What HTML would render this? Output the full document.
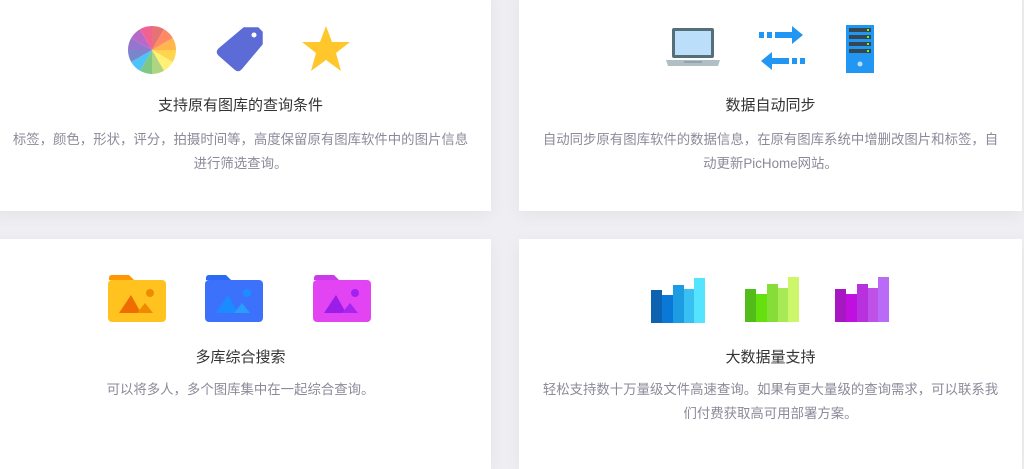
<!DOCTYPE html>
<html><head><meta charset="utf-8"><style>
*{margin:0;padding:0;box-sizing:border-box}
body{width:1024px;height:457px;background:#efeff3;position:relative;overflow:hidden;font-family:"Liberation Sans","Noto Sans CJK SC",sans-serif}
.card{position:absolute;background:#fff;box-shadow:0 4px 16px rgba(0,0,0,0.05)}
.t{position:absolute;left:0;right:0;text-align:center;font-size:15px;color:#333;white-space:nowrap}
.d{position:absolute;left:0;right:0;text-align:center;font-size:13.4px;line-height:24px;color:#8b8a99;white-space:nowrap}
svg{position:absolute;overflow:visible}
</style></head><body>
<div class="card" style="left:-10px;top:-10px;width:501px;height:221px">
 <svg style="left:138px;top:36px" width="48" height="48" viewBox="-24 -24 48 48">
  <g>
   <path d="M0 0L0-24A24 24 0 0 1 12-20.8Z" fill="#e57373"/>
   <path d="M0 0L12-20.8A24 24 0 0 1 20.8-12Z" fill="#ff8a65"/>
   <path d="M0 0L20.8-12A24 24 0 0 1 24 0Z" fill="#ffb74d"/>
   <path d="M0 0L24 0A24 24 0 0 1 20.8 12Z" fill="#ffd54f"/>
   <path d="M0 0L20.8 12A24 24 0 0 1 12 20.8Z" fill="#fff176"/>
   <path d="M0 0L12 20.8A24 24 0 0 1 0 24Z" fill="#aed581"/>
   <path d="M0 0L0 24A24 24 0 0 1-12 20.8Z" fill="#81c784"/>
   <path d="M0 0L-12 20.8A24 24 0 0 1-20.8 12Z" fill="#4fc3f7"/>
   <path d="M0 0L-20.8 12A24 24 0 0 1-24 0Z" fill="#7986cb"/>
   <path d="M0 0L-24 0A24 24 0 0 1-20.8-12Z" fill="#9575cd"/>
   <path d="M0 0L-20.8-12A24 24 0 0 1-12-20.8Z" fill="#ba68c8"/>
   <path d="M0 0L-12-20.8A24 24 0 0 1 0-24Z" fill="#f06292"/>
  </g>
 </svg>
 <svg style="left:226px;top:37px" width="48" height="46" viewBox="0 0 48 46">
  <path d="M28 1H42L46 5V17L25 42Q22 45 19 42L3 28Q0 25 3 22Z" fill="#5c6bd6" stroke="#5c6bd6" stroke-width="1.5" stroke-linejoin="round"/>
  <circle cx="38" cy="8" r="2.5" fill="#fff"/>
 </svg>
 <svg style="left:311px;top:35px" width="50" height="48" viewBox="0 0 50 48">
  <path d="M25 1L31 17L49 17L35 28L40 46L25 35L10 46L15 28L1 17L19 17Z" fill="#ffc72c"/>
 </svg>
 <div class="t" style="top:104px">支持原有图库的查询条件</div>
 <div class="d" style="top:138px">标签，颜色，形状，评分，拍摄时间等，高度保留原有图库软件中的图片信息<br>进行筛选查询。</div>
</div>
<div class="card" style="left:519px;top:-10px;width:503px;height:221px">
 <svg style="left:145px;top:36px" width="58" height="44" viewBox="0 0 58 44">
  <rect x="8" y="2" width="42" height="30" rx="2" fill="#546e7a"/>
  <rect x="11" y="5" width="36" height="24" fill="#bbdefb"/>
  <path d="M2 34H56L54 40H4Z" fill="#b0bec5"/>
  <rect x="20" y="35" width="18" height="2" fill="#90a4ae"/>
 </svg>
 <svg style="left:240px;top:35px" width="46" height="46" viewBox="0 0 46 46">
  <rect x="0" y="7" width="5" height="6" fill="#2196f3"/><rect x="8" y="7" width="5" height="6" fill="#2196f3"/>
  <path d="M16 7H33V1L44 10L33 19V13H16Z" fill="#2196f3"/>
  <rect x="41" y="33" width="5" height="6" fill="#2196f3"/><rect x="33" y="33" width="5" height="6" fill="#2196f3"/>
  <path d="M30 33H13V27L2 36L13 45V39H30Z" fill="#2196f3"/>
 </svg>
 <svg style="left:326px;top:35px" width="30" height="48" viewBox="0 0 30 48">
  <rect x="1" y="0" width="28" height="48" fill="#2196f3"/>
  <rect x="4" y="3" width="22" height="4" fill="#37474f"/><rect x="4" y="10" width="22" height="4" fill="#37474f"/>
  <rect x="4" y="17" width="22" height="4" fill="#37474f"/><rect x="4" y="24" width="22" height="4" fill="#37474f"/>
  <rect x="22" y="4" width="2" height="2" fill="#76ff03"/><rect x="22" y="11" width="2" height="2" fill="#76ff03"/>
  <rect x="22" y="18" width="2" height="2" fill="#76ff03"/><rect x="22" y="25" width="2" height="2" fill="#76ff03"/>
  <circle cx="15" cy="39" r="2.5" fill="#bbdefb"/>
 </svg>
 <div class="t" style="top:104px">数据自动同步</div>
 <div class="d" style="top:138px">自动同步原有图库软件的数据信息，在原有图库系统中增删改图片和标签，自<br>动更新PicHome网站。</div>
</div>
<div class="card" style="left:-10px;top:239px;width:501px;height:230px">
 <svg style="left:117px;top:36px" width="60" height="48" viewBox="0 0 60 48">
  <path d="M2 3Q2 0 5 0H22L27 5H2Z" fill="#ff9800"/>
  <rect x="1" y="5" width="58" height="42" rx="4" fill="#ffc21f"/>
  <circle cx="43" cy="18" r="4" fill="#f08a00"/>
  <path d="M12 38L24 20L34 38Z" fill="#ef6c00"/><path d="M30 38L38 28L46 38Z" fill="#f08a00"/>
 </svg>
 <svg style="left:214px;top:36px" width="60" height="48" viewBox="0 0 60 48">
  <path d="M2 3Q2 0 5 0H22L27 5H2Z" fill="#2b6bf3"/>
  <rect x="1" y="5" width="58" height="42" rx="4" fill="#3c71fb"/>
  <circle cx="43" cy="18" r="4" fill="#1f8cff"/>
  <path d="M12 38L24 20L34 38Z" fill="#1a8cff"/><path d="M30 38L38 28L46 38Z" fill="#2a9bff"/>
 </svg>
 <svg style="left:322px;top:36px" width="60" height="48" viewBox="0 0 60 48">
  <path d="M2 3Q2 0 5 0H22L27 5H2Z" fill="#c93ae8"/>
  <rect x="1" y="5" width="58" height="42" rx="4" fill="#e244f4"/>
  <circle cx="43" cy="18" r="4" fill="#a221f0"/>
  <path d="M12 38L24 20L34 38Z" fill="#9c1ce8"/><path d="M30 38L38 28L46 38Z" fill="#a626f0"/>
 </svg>
 <div class="t" style="top:107px">多库综合搜索</div>
 <div class="d" style="top:139px">可以将多人，多个图库集中在一起综合查询。</div>
</div>
<div class="card" style="left:519px;top:239px;width:503px;height:230px">
 <svg style="left:132px;top:38px" width="54" height="46" viewBox="0 0 54 46">
  <rect x="0" y="13" width="11" height="33" fill="#0d63b0"/><rect x="11" y="18" width="11" height="28" fill="#0a78d6"/>
  <rect x="22" y="8" width="11" height="38" fill="#1d9be3"/><rect x="33" y="12" width="10" height="34" fill="#38c0f2"/>
  <rect x="43" y="1" width="11" height="45" fill="#55e4ff"/>
 </svg>
 <svg style="left:226px;top:37px" width="54" height="46" viewBox="0 0 54 46">
  <rect x="0" y="13" width="11" height="33" fill="#52bd1a"/><rect x="11" y="18" width="11" height="28" fill="#64e00f"/>
  <rect x="22" y="8" width="11" height="38" fill="#87dd38"/><rect x="33" y="12" width="10" height="34" fill="#a8ea55"/>
  <rect x="43" y="1" width="11" height="45" fill="#ccf76b"/>
 </svg>
 <svg style="left:316px;top:37px" width="54" height="46" viewBox="0 0 54 46">
  <rect x="0" y="13" width="11" height="33" fill="#a718c2"/><rect x="11" y="18" width="11" height="28" fill="#c010e0"/>
  <rect x="22" y="8" width="11" height="38" fill="#b732de"/><rect x="33" y="12" width="10" height="34" fill="#bf50e8"/>
  <rect x="43" y="1" width="11" height="45" fill="#b96af7"/>
 </svg>
 <div class="t" style="top:107px">大数据量支持</div>
 <div class="d" style="top:139px">轻松支持数十万量级文件高速查询。如果有更大量级的查询需求，可以联系我<br>们付费获取高可用部署方案。</div>
</div>
</body></html>
